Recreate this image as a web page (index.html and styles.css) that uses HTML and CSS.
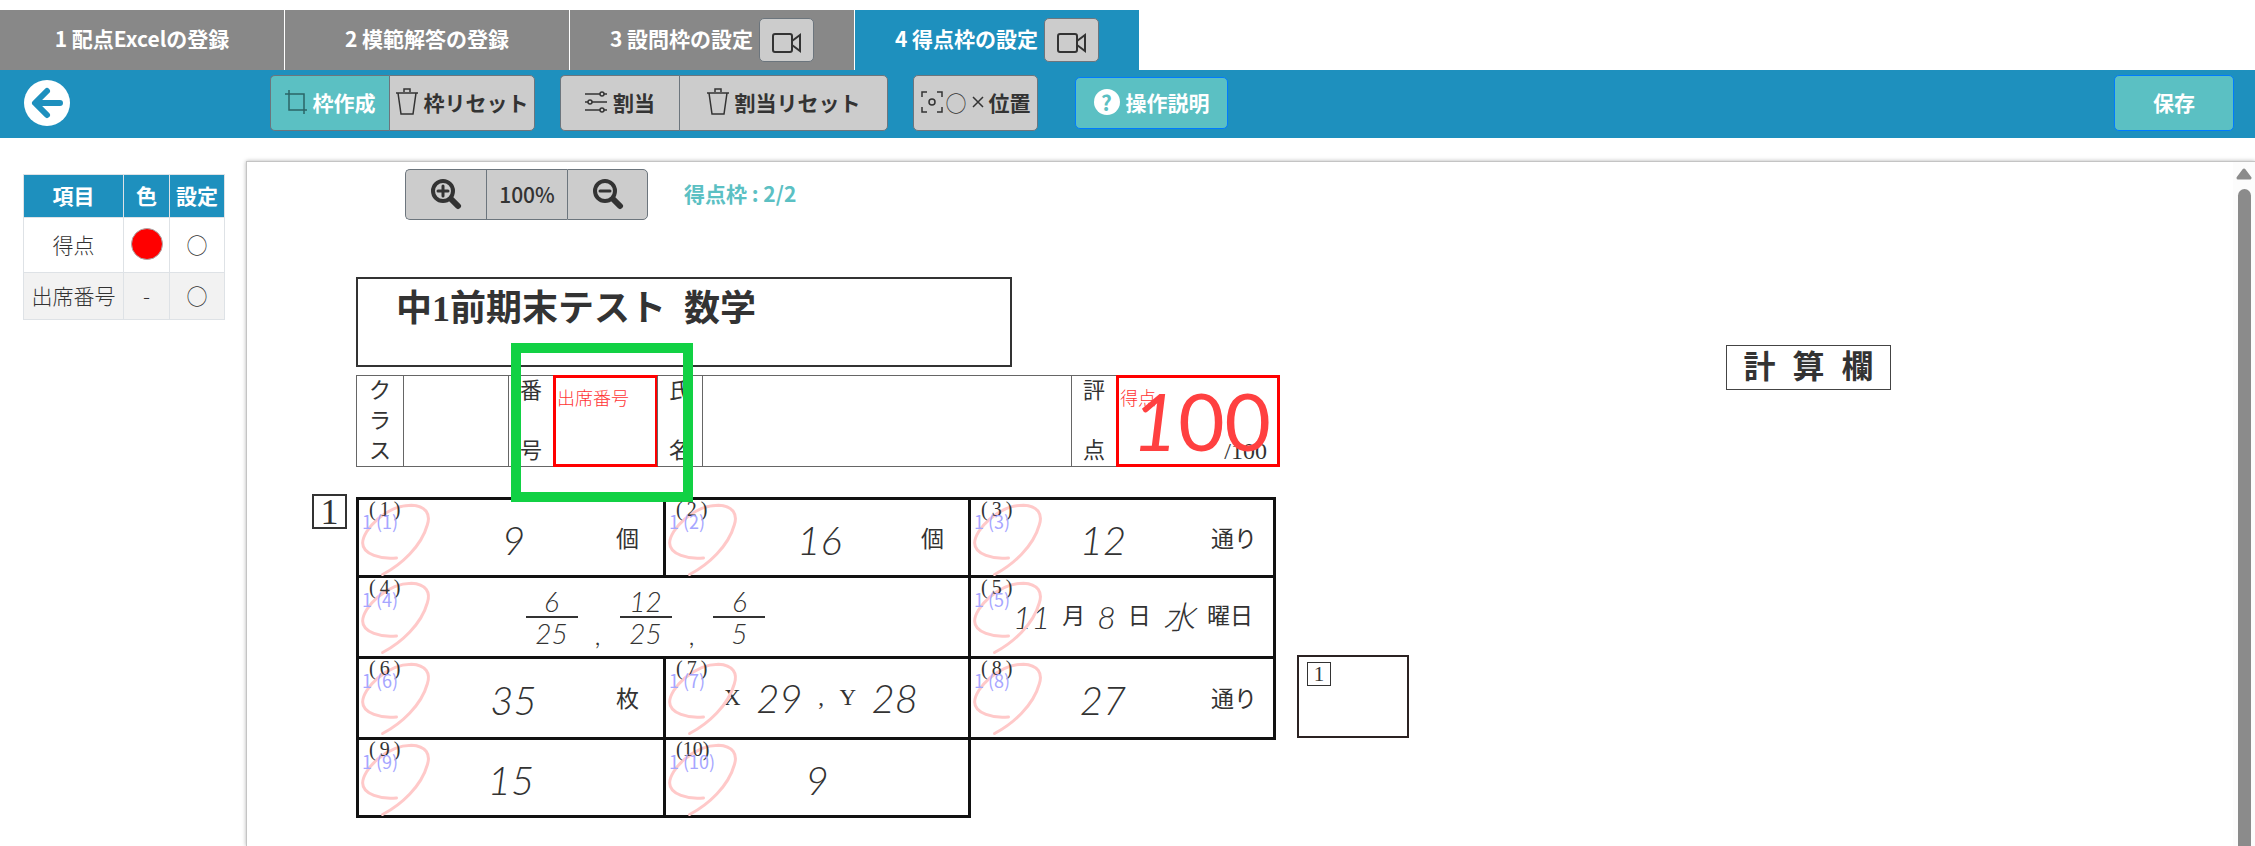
FILE: index.html
```html
<!DOCTYPE html>
<html lang="ja">
<head>
    <meta charset="UTF-8">
    <meta name="viewport" content="width=device-width, initial-scale=1.0">
    <title>得点枠の設定</title>
    <link rel="stylesheet" href="styles.css">
</head>
<body>
    <!-- Shared icons -->
    <svg class="defs" aria-hidden="true">
        <symbol id="i-video" viewBox="0 0 30 22"><path d="M3 2h15q2 0 2 2v14q0 2-2 2H3q-2 0-2-2V4q0-2 2-2zM20 9l8-6v16l-8-6" fill="none" stroke="#333" stroke-width="2"/></symbol>
        <symbol id="i-trash" viewBox="0 0 22 28"><path d="M0 5h22M8 4V1h6v3M2 5l3 21h12l3-21" fill="none" stroke="#333" stroke-width="1.5"/></symbol>
        <symbol id="i-mark" viewBox="0 0 220 225"><path d="M110 165C65 170 8 155 8 120C8 80 80 6 155 6C200 8 213 35 203 65C185 130 125 185 68 215" fill="none" stroke="#ffc9c9" stroke-width="9" stroke-linecap="round"/></symbol>
    </svg>

    <nav class="tabs">
        <div class="tab"><a href="#">1 配点Excelの登録</a></div>
        <div class="tab"><a href="#">2 模範解答の登録</a></div>
        <div class="tab"><a href="#">3 設問枠の設定</a><button class="video" aria-label="動画"><svg width="30" height="22"><use href="#i-video"/></svg></button></div>
        <div class="tab active"><a href="#">4 得点枠の設定</a><button class="video" aria-label="動画"><svg width="30" height="22"><use href="#i-video"/></svg></button></div>
    </nav>

    <header class="toolbar">
        <button class="back" aria-label="戻る">
            <svg width="46" height="46" viewBox="0 0 46 46"><circle cx="23" cy="23" r="23" fill="#fff"/><path d="M36 23H12M23 11L11 23l12 12" fill="none" stroke="#1e90be" stroke-width="6" stroke-linecap="round" stroke-linejoin="round"/></svg>
        </button>
        <div class="group">
            <button class="btn create"><svg width="22" height="24" viewBox="0 0 22 24"><path d="M4 0v20h18M0 4h19v20" fill="none" stroke="#2b6467" stroke-width="1.5"/></svg>枠作成</button>
            <button class="btn reset"><svg width="22" height="28"><use href="#i-trash"/></svg>枠リセット</button>
        </div>
        <div class="group">
            <button class="btn assign"><svg width="22" height="22" viewBox="0 0 22 22"><g fill="none" stroke="#333" stroke-width="1.5"><path d="M0 3h15M19 3h3M0 11h3M7 11h15M0 19h15M19 19h3"/><circle cx="17" cy="3" r="2"/><circle cx="5" cy="11" r="2"/><circle cx="17" cy="19" r="2"/></g></svg>割当</button>
            <button class="btn assign-reset"><svg width="22" height="28"><use href="#i-trash"/></svg>割当リセット</button>
        </div>
        <button class="btn position"><svg width="22" height="22" viewBox="0 0 22 22"><path d="M1 6V1h5M16 1h5v5M21 16v5h-5M6 21H1v-5" fill="none" stroke="#333" stroke-width="1.5"/><circle cx="11" cy="11" r="3" fill="none" stroke="#333" stroke-width="1.5"/></svg><span class="thin">○</span><svg width="16" height="22" viewBox="0 0 16 22"><path d="M3 6l10 10M13 6L3 16" stroke="#333" stroke-width="1.5"/></svg>位置</button>
        <button class="btn help"><span class="question">?</span>操作説明</button>
        <button class="btn save">保存</button>
    </header>

    <main>
        <aside>
            <table class="items">
                <thead>
                    <tr><th>項目</th><th>色</th><th>設定</th></tr>
                </thead>
                <tbody>
                    <tr><td>得点</td><td><span class="dot"></span></td><td>○</td></tr>
                    <tr><td>出席番号</td><td>-</td><td>○</td></tr>
                </tbody>
            </table>
        </aside>

        <section class="viewer">
            <div class="canvas">
                <div class="zoombar">
                    <div class="group">
                        <button class="zoom" aria-label="拡大"><svg width="32" height="32" viewBox="0 0 32 32"><g fill="none" stroke="#333" stroke-linecap="round"><circle cx="13" cy="13" r="10" stroke-width="4"/><path d="M21 21l7 7" stroke-width="6"/><path d="M8 13h10M13 8v10" stroke-width="3"/></g></svg></button>
                        <button class="zoom">100%</button>
                        <button class="zoom" aria-label="縮小"><svg width="32" height="32" viewBox="0 0 32 32"><g fill="none" stroke="#333" stroke-linecap="round"><circle cx="13" cy="13" r="10" stroke-width="4"/><path d="M21 21l7 7" stroke-width="6"/><path d="M8 13h10" stroke-width="3"/></g></svg></button>
                    </div>
                    <span class="count">得点枠 : 2/2</span>
                </div>

                <!-- Answer sheet -->
                <div class="sheet">
                    <div class="heading">
                        <h1>中1前期末テスト&ensp;数学</h1>
                        <div class="info">
                            <div class="cell name three"><span>ク</span><span>ラ</span><span>ス</span></div>
                            <div class="cell class-box"></div>
                            <div class="cell name"><span>番</span><span>号</span></div>
                            <div class="cell number-box"><div class="frame">出席番号</div></div>
                            <div class="cell name"><span>氏</span><span>名</span></div>
                            <div class="cell name-box"></div>
                            <div class="cell name"><span>評</span><span>点</span></div>
                            <div class="cell score-box"><span class="full">/100</span><div class="frame">得点<span class="score"><i>1</i>00</span></div></div>
                            <div class="highlight"></div>
                        </div>
                    </div>
                    <div class="calc"><span>計</span><span>算</span><span>欄</span></div>

                    <div class="big-no">1</div>
                    <table class="answers">
                        <colgroup><col class="c1"><col class="c2"><col class="c3"></colgroup>
                        <tr>
                            <td><svg class="mark"><use href="#i-mark"/></svg><span class="no">(&thinsp;1&thinsp;)</span><span class="tag">1 (1)</span><div class="answer"><em>9</em><span class="unit">個</span></div></td>
                            <td><svg class="mark"><use href="#i-mark"/></svg><span class="no">(&thinsp;2&thinsp;)</span><span class="tag">1 (2)</span><div class="answer"><em>16</em><span class="unit">個</span></div></td>
                            <td><svg class="mark"><use href="#i-mark"/></svg><span class="no">(&thinsp;3&thinsp;)</span><span class="tag">1 (3)</span><div class="answer ways"><em>12</em><span class="unit">通り</span></div></td>
                        </tr>
                        <tr class="tall">
                            <td colspan="2"><svg class="mark"><use href="#i-mark"/></svg><span class="no">(&thinsp;4&thinsp;)</span><span class="tag">1 (4)</span>
                                <div class="fractions">
                                    <span class="fraction"><em>6</em><em>25</em></span><em class="comma">,</em>
                                    <span class="fraction"><em>12</em><em>25</em></span><em class="comma">,</em>
                                    <span class="fraction"><em>6</em><em>5</em></span>
                                </div>
                            </td>
                            <td><svg class="mark"><use href="#i-mark"/></svg><span class="no">(&thinsp;5&thinsp;)</span><span class="tag">1 (5)</span><div class="date"><em>11</em><span>月</span><em>8</em><span>日</span><em>水</em><span>曜日</span></div></td>
                        </tr>
                        <tr class="tall">
                            <td><svg class="mark"><use href="#i-mark"/></svg><span class="no">(&thinsp;6&thinsp;)</span><span class="tag">1 (6)</span><div class="answer"><em>35</em><span class="unit">枚</span></div></td>
                            <td><svg class="mark"><use href="#i-mark"/></svg><span class="no">(&thinsp;7&thinsp;)</span><span class="tag">1 (7)</span><div class="pair"><span>X</span><em>29</em><span>,</span><span>Y</span><em>28</em></div></td>
                            <td><svg class="mark"><use href="#i-mark"/></svg><span class="no">(&thinsp;8&thinsp;)</span><span class="tag">1 (8)</span><div class="answer ways"><em>27</em><span class="unit">通り</span></div></td>
                        </tr>
                        <tr>
                            <td><svg class="mark"><use href="#i-mark"/></svg><span class="no">(&thinsp;9&thinsp;)</span><span class="tag">1 (9)</span><div class="answer alone"><em>15</em></div></td>
                            <td><svg class="mark"><use href="#i-mark"/></svg><span class="no">(10)</span><span class="tag">1 (10)</span><div class="answer alone"><em>9</em></div></td>
                        </tr>
                    </table>
                    <div class="work"><span>1</span></div>
                </div>
            </div>
            <div class="scrollbar" aria-hidden="true">
                <svg width="16" height="12" viewBox="0 0 16 12"><path d="M8 2l6 8H2z" fill="#8b8b8b" stroke="#8b8b8b" stroke-width="3" stroke-linejoin="round"/></svg>
                <div class="thumb"></div>
            </div>
        </section>
    </main>
</body>
</html>
```
FILE: styles.css
```css
* {
    box-sizing: border-box;
}

body {
    display: flex;
    flex-direction: column;
    height: 100vh;
    margin: 0;
    padding-top: 10px;
    overflow: hidden;
    background: #fff;
    color: #333;
    font-family: "Noto Sans CJK JP", sans-serif;
    font-size: 21px;
    line-height: 30px;
}

button {
    font: inherit;
    color: inherit;
    padding: 0;
    cursor: pointer;
}

svg {
    display: block;
    flex: none;
}

.defs {
    position: absolute;
    width: 0;
    height: 0;
}

/* Tabs */
.tabs {
    display: flex;
    gap: 1px;
    flex: none;
}

.tab {
    display: flex;
    align-items: center;
    justify-content: center;
    gap: 6px;
    width: 284px;
    height: 60px;
    background: #888;
    font-weight: bold;
}

.tab.active {
    background: #1e90be;
}

.tab a {
    padding-bottom: 4px;
    color: #fff;
    text-decoration: none;
}

.video {
    display: flex;
    align-items: center;
    justify-content: center;
    width: 55px;
    height: 44px;
    padding-top: 6px;
    background: #ccc;
    border: 1px solid #6c757d;
    border-radius: 5px;
}

/* Toolbar */
.toolbar {
    display: flex;
    align-items: center;
    flex: none;
    gap: 25px;
    height: 68px;
    padding: 0 21px 2px 24px;
    background: #1e90be;
}

.back {
    width: 46px;
    height: 46px;
    margin-right: 175px;
    background: none;
    border: 0;
}

.group {
    display: flex;
}

.btn {
    display: flex;
    align-items: center;
    justify-content: center;
    gap: 6px;
    height: 56px;
    padding-bottom: 2px;
    background: #ccc;
    border: 1px solid #6c757d;
    border-radius: 5px;
    font-weight: bold;
    white-space: nowrap;
}

.group button:not(:last-child) {
    border-right: 0;
    border-top-right-radius: 0;
    border-bottom-right-radius: 0;
}

.group button:not(:first-child) {
    border-top-left-radius: 0;
    border-bottom-left-radius: 0;
}

.create {
    width: 119px;
    background: #5bc0c3;
    color: #fff;
}

.reset {
    width: 146px;
}

.assign {
    width: 119px;
}

.assign-reset {
    width: 209px;
}

.position {
    gap: 3px;
    width: 125px;
}

.thin {
    font-weight: 300;
}

.help,
.save {
    background: #5bc0c3;
    border-color: #007bff;
    color: #fff;
}

.help {
    width: 153px;
    height: 52px;
    margin-left: 12px;
}

.question {
    width: 26px;
    height: 26px;
    border-radius: 50%;
    background: #fff;
    color: #5bc0c3;
    line-height: 26px;
}

.save {
    width: 120px;
    margin-left: auto;
}

/* Item list */
main {
    display: flex;
    flex: 1;
    min-height: 0;
}

aside {
    flex: none;
    width: 246px;
    padding: 36px 21px 0 23px;
}

.items {
    width: 100%;
    border-collapse: collapse;
    table-layout: fixed;
    text-align: center;
    font-weight: 300;
}

.items th,
.items td {
    padding: 0 0 2px;
    border: 1px solid #dee2e6;
}

.items th {
    height: 43px;
    background: #1e90be;
    color: #fff;
}

.items th:first-child {
    width: 100px;
}

.items th:nth-child(2) {
    width: 46px;
}

.items td {
    height: 55px;
}

.items tr:nth-child(2) td {
    height: 47px;
    background: #f2f2f2;
}

.dot {
    display: block;
    width: 32px;
    height: 32px;
    margin: 0 auto;
    border: 1px solid #aaa;
    border-radius: 50%;
    background: #f00;
}

/* Viewer */
.viewer {
    display: flex;
    flex: 1;
    min-width: 0;
    margin-top: 23px;
    overflow: hidden;
    border: 1px solid #c4c4c4;
    border-width: 1px 0 0 1px;
    box-shadow: 0 0 4px rgba(0, 0, 0, 0.3);
}

.canvas {
    flex: 1;
    min-width: 0;
    overflow: hidden;
}

.zoombar {
    display: flex;
    align-items: center;
    gap: 36px;
    margin: 7px 0 0 158px;
}

.zoom {
    display: flex;
    align-items: center;
    justify-content: center;
    width: 81px;
    height: 51px;
    padding-bottom: 2px;
    background: #ccc;
    border: 1px solid #6c757d;
    border-radius: 5px;
    font-weight: 500;
}

.count {
    padding-bottom: 4px;
    color: #5bc0c3;
    font-weight: bold;
}

.scrollbar {
    display: flex;
    flex-direction: column;
    align-items: center;
    gap: 9px;
    width: 22px;
    padding-top: 6px;
    background: #fcfcfc;
}

.thumb {
    flex: 1;
    width: 13px;
    border-radius: 7px 7px 0 0;
    background: #8b8b8b;
}

/* Answer sheet */
.sheet {
    display: grid;
    grid-template-columns: 44px 941px auto;
    row-gap: 27px;
    justify-content: start;
    align-items: start;
    margin: 57px 0 0 65px;
    font-family: "Liberation Serif", "Noto Sans CJK JP", serif;
}

.heading {
    grid-column: 2;
}

h1 {
    width: 656px;
    height: 90px;
    margin: 0 0 8px;
    padding: 10px 38px;
    border: 2px solid #333;
    font-size: 36px;
    line-height: 40px;
}

.info {
    position: relative;
    display: flex;
    width: 924px;
    height: 92px;
    border: 1px solid #666;
    border-left: 0;
}

.cell {
    position: relative;
    border-left: 1px solid #666;
}

.name {
    display: flex;
    flex-direction: column;
    align-items: center;
    justify-content: space-between;
    width: 45px;
    font-size: 22px;
}

.three {
    width: 47px;
}

.class-box {
    width: 105px;
}

.number-box {
    width: 104px;
}

.name-box {
    flex: 1;
}

.score-box {
    width: 163px;
}

.full {
    position: absolute;
    right: 12px;
    bottom: 0;
    font-size: 24px;
}

.frame {
    position: absolute;
    inset: -1px;
    padding: 4px 1px;
    border: 3px solid #f00;
    color: #f33;
    font-family: "Noto Sans CJK JP", sans-serif;
    font-size: 18px;
    font-weight: 300;
}

.score {
    position: absolute;
    top: 6px;
    right: 6px;
    color: #ff4040;
    font-family: Lato, sans-serif;
    font-size: 80px;
    font-weight: 400;
    line-height: 72px;
}

.highlight {
    position: absolute;
    top: -33px;
    left: 155px;
    width: 182px;
    height: 159px;
    border: 10px solid #11d144;
}

.calc {
    display: flex;
    justify-content: center;
    gap: 17px;
    width: 165px;
    height: 45px;
    margin: 68px 0 0 429px;
    border: 1px solid #444;
    font-size: 32px;
    font-weight: bold;
    line-height: 43px;
}

.big-no {
    width: 35px;
    height: 35px;
    border: 2px solid #333;
    font-size: 36px;
    line-height: 32px;
    text-align: center;
}

.answers {
    width: 920px;
    margin-top: 3px;
    border-collapse: collapse;
    table-layout: fixed;
}

.c1 {
    width: 307px;
}

.c2 {
    width: 305px;
}

.answers td {
    position: relative;
    height: 78px;
    padding: 0;
    border: 3px solid #111;
}

.answers .tall td {
    height: 81px;
}

.no,
.tag {
    position: absolute;
    left: 10px;
    top: -2px;
    font-size: 20px;
    line-height: 22px;
}

.tag {
    left: 3px;
    top: 10px;
    color: #a6a6ff;
    font-family: "Noto Sans CJK JP", sans-serif;
    font-size: 18px;
    font-weight: 400;
}

.mark {
    position: absolute;
    left: 1px;
    top: 3px;
    width: 73px;
    height: 75px;
}

.answers em {
    color: #333;
    font-family: Lato, "Noto Sans CJK JP", sans-serif;
    font-size: 40px;
    font-weight: 300;
    line-height: 44px;
}

.answer {
    display: flex;
    align-items: center;
    padding: 4px 24px 0 52px;
}

.answer em {
    flex: 1;
    text-align: center;
}

.unit,
.date span,
.pair span {
    font-size: 23px;
}

.ways {
    padding: 4px 16px 0 24px;
}

.alone {
    padding: 4px 16px 0;
}

.fractions {
    display: flex;
    justify-content: center;
    gap: 18px;
    padding-right: 36px;
}

.fraction {
    display: flex;
    flex-direction: column;
    align-items: center;
    width: 52px;
}

.answers .fraction em {
    font-size: 28px;
    line-height: 30px;
}

.fraction em:first-child {
    width: 100%;
    border-bottom: 2px solid #333;
    text-align: center;
}

.answers .comma {
    align-self: flex-end;
    font-size: 28px;
    line-height: 28px;
}

.date,
.pair {
    display: flex;
    align-items: center;
    justify-content: space-between;
    padding: 0 20px 0 42px;
}

.answers .date em {
    font-size: 32px;
}

.pair {
    padding: 0 50px 0 58px;
}

.work {
    width: 112px;
    height: 83px;
    margin-top: 161px;
    padding: 5px 8px;
    border: 2px solid #2b2222;
}

.work span {
    display: block;
    width: 24px;
    height: 24px;
    border: 1px solid #333;
    line-height: 22px;
    text-align: center;
}
```
